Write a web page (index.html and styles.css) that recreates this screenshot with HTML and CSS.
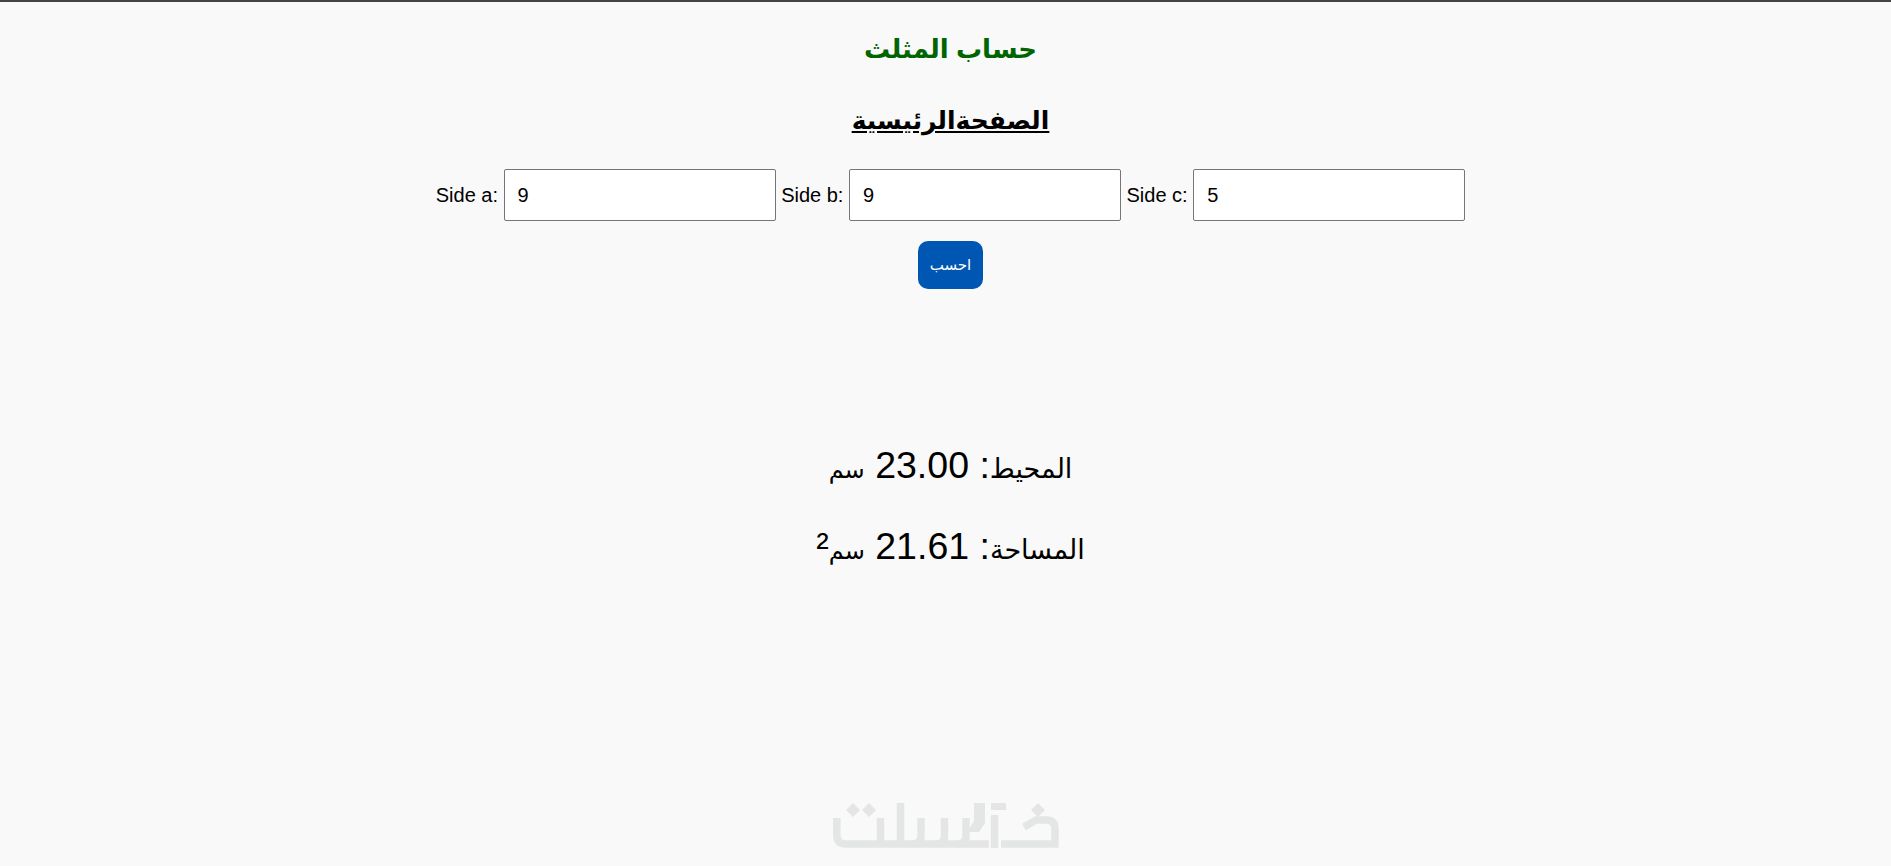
FILE: index.html
```html
<!DOCTYPE html>
<html lang="ar">
<head>
    <meta charset="UTF-8">
    <title>حساب المثلث</title>
    <link rel="stylesheet" href="styles.css">
</head>
<body>
    <main class="page">
        <h1 class="title">حساب المثلث</h1>
        <h2 class="home"><a href="#">الصفحةالرئيسية</a></h2>
        <form class="sides" dir="ltr">
            <label for="a">Side a:</label>
            <input id="a" type="number" value="9">
            <label for="b">Side b:</label>
            <input id="b" type="number" value="9">
            <label for="c">Side c:</label>
            <input id="c" type="number" value="5">
        </form>
        <button class="calc" type="button">احسب</button>
        <div class="results">
            <p><span class="word">المحيط</span>: 23.00 <span class="unit">سم</span></p>
            <p><span class="word">المساحة</span>: 21.61 <span class="unit">سم</span>²</p>
        </div>
    </main>
    <footer class="footer">
        <svg class="logo" viewBox="0 0 226 45" width="226" height="45" role="img" aria-label="خمسات">
            <g fill="#e4e5e5">
                <path d="M20 0l7 7-7 7-7-7zM36 0l7 7-7 7-7-7zM205 0l7 7-7 7-7-7z"/>
                <path d="M141 0h11v20l-6 9h-12l7-11z"/>
                <path d="M158 0h15v7h-15z"/>
            </g>
            <g fill="none" stroke="#e4e5e5" stroke-width="7.5">
                <path d="M3.8 15v17q0 9 9 9h143"/>
                <path d="M47.5 15v26M67.5 0v41"/>
                <path d="M88 15v18q0 8-8 8M111.5 15v18q0 8-8 8M133 15v18q0 8-8 8"/>
                <path d="M161.5 12v33"/>
                <path d="M191 24l12-7h10q9 0 9 9v15h-54"/>
            </g>
        </svg>
    </footer>
</body>
</html>
```
FILE: styles.css
```css
* {
    box-sizing: border-box;
}

html, body {
    height: 100%;
}

body {
    display: flex;
    flex-direction: column;
    margin: 0;
    border-top: 2px solid #444;
    background-color: #f9f9f9;
    font-family: "Liberation Sans", "DejaVu Sans", sans-serif;
    color: #000;
    text-align: center;
    overflow: hidden;
}

.page {
    padding-left: 10px;
}

.title {
    margin: 29px 0 0;
    font-size: 26px;
    line-height: 37px;
    color: #006400;
}

.home {
    margin: 34px 0 0;
    font-size: 25px;
    line-height: 37px;
}

.home a {
    color: #000;
}

.sides {
    display: flex;
    justify-content: center;
    align-items: center;
    gap: 5.56px;
    margin-top: 30px;
    font-size: 20px;
}

.sides input {
    width: 272px;
    height: 52px;
    padding: 0 13px;
    border: 1px solid #767676;
    border-radius: 2px;
    background: #fff;
    font: inherit;
    appearance: textfield;
}

.calc {
    display: block;
    width: 65px;
    height: 48px;
    margin: 20px auto 0;
    border: 0;
    border-radius: 10px;
    background-color: #0056b3;
    color: #fff;
    font-family: inherit;
    font-size: 15px;
}

.results {
    margin-top: 154px;
    font-size: 37.5px;
}

.results p {
    margin: 0 0 37px;
    line-height: 44px;
}

.results p:first-child {
    margin-bottom: 32px;
}

.word {
    font-size: 27px;
}

.unit {
    font-size: 24px;
}

.footer {
    margin-top: auto;
    padding-bottom: 18px;
}

.logo {
    display: block;
    margin: 0 auto;
}
```
